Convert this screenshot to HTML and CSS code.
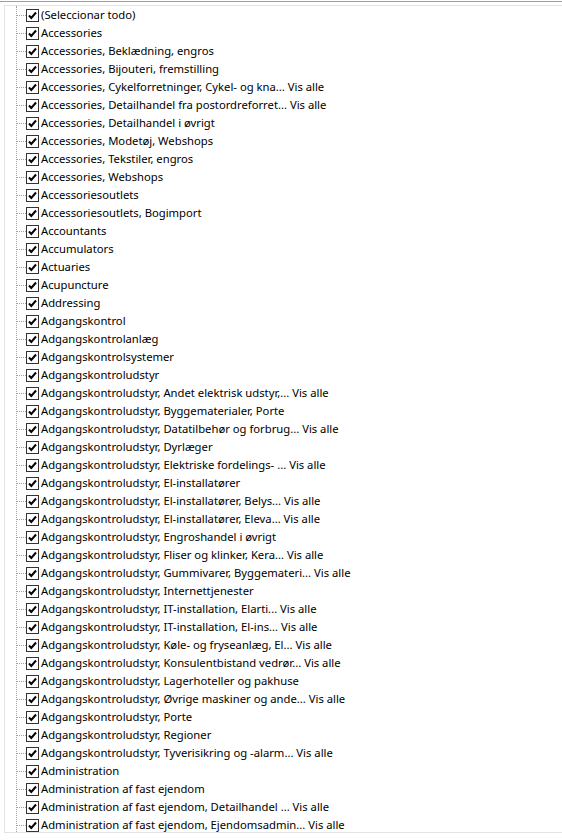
FILE: index.html
```html
<!DOCTYPE html>
<html>
<head>
<meta charset="utf-8">
<link rel="stylesheet" href="styles.css">
</head>
<body>
<div class="frame">
  <div class="panel">
    <div class="tree">
      <div class="row"><span class="conn"></span><span class="cb"><svg viewBox="0 0 13 13" width="13" height="13"><path d="M3 6.5 L5.3 9 L10 3.5" fill="none" stroke="#000" stroke-width="2"/></svg></span><span class="label">(Seleccionar todo)</span></div>
    </div>
  </div>
</div>
<script src="app.js"></script>
</body>
</html>
```

FILE: app.js
```js
const items = [
"Accessories",
"Accessories, Beklædning, engros",
"Accessories, Bijouteri, fremstilling",
"Accessories, Cykelforretninger, Cykel- og kna... Vis alle",
"Accessories, Detailhandel fra postordreforret... Vis alle",
"Accessories, Detailhandel i øvrigt",
"Accessories, Modetøj, Webshops",
"Accessories, Tekstiler, engros",
"Accessories, Webshops",
"Accessoriesoutlets",
"Accessoriesoutlets, Bogimport",
"Accountants",
"Accumulators",
"Actuaries",
"Acupuncture",
"Addressing",
"Adgangskontrol",
"Adgangskontrolanlæg",
"Adgangskontrolsystemer",
"Adgangskontroludstyr",
"Adgangskontroludstyr, Andet elektrisk udstyr,... Vis alle",
"Adgangskontroludstyr, Byggematerialer, Porte",
"Adgangskontroludstyr, Datatilbehør og forbrug... Vis alle",
"Adgangskontroludstyr, Dyrlæger",
"Adgangskontroludstyr, Elektriske fordelings- ... Vis alle",
"Adgangskontroludstyr, El-installatører",
"Adgangskontroludstyr, El-installatører, Belys... Vis alle",
"Adgangskontroludstyr, El-installatører, Eleva... Vis alle",
"Adgangskontroludstyr, Engroshandel i øvrigt",
"Adgangskontroludstyr, Fliser og klinker, Kera... Vis alle",
"Adgangskontroludstyr, Gummivarer, Byggemateri... Vis alle",
"Adgangskontroludstyr, Internettjenester",
"Adgangskontroludstyr, IT-installation, Elarti... Vis alle",
"Adgangskontroludstyr, IT-installation, El-ins... Vis alle",
"Adgangskontroludstyr, Køle- og fryseanlæg, El... Vis alle",
"Adgangskontroludstyr, Konsulentbistand vedrør... Vis alle",
"Adgangskontroludstyr, Lagerhoteller og pakhuse",
"Adgangskontroludstyr, Øvrige maskiner og ande... Vis alle",
"Adgangskontroludstyr, Porte",
"Adgangskontroludstyr, Regioner",
"Adgangskontroludstyr, Tyverisikring og -alarm... Vis alle",
"Administration",
"Administration af fast ejendom",
"Administration af fast ejendom, Detailhandel ... Vis alle",
"Administration af fast ejendom, Ejendomsadmin... Vis alle"
];
const tree = document.querySelector('.tree');
const tpl = tree.querySelector('.row');
for (const t of items) {
  const r = tpl.cloneNode(true);
  r.querySelector('.label').textContent = t;
  tree.appendChild(r);
}
```

FILE: styles.css
```css
html, body {
  margin: 0;
  padding: 0;
  background: #fff;
}
body {
  width: 562px;
  height: 840px;
  overflow: hidden;
  font-family: "Noto Sans", "Segoe UI", sans-serif;
  font-size: 11.25px;
  color: #000;
}
.frame {
  border-top: 1px solid #a0a0a0;
  margin-top: 1px;
  padding: 3px 0 0 4px;
}
.panel {
  border: 1px solid #e3e3e3;
  border-right: none;
  height: 826px;
  overflow: hidden;
}
.tree {
  margin: 9px 0 0 11px;
  border-left: 1px dotted #a0a0a0;
  height: 830px;
}
.row {
  display: flex;
  align-items: center;
  height: 18px;
}
.row:first-child {
  margin-top: -9px;
}
.conn {
  width: 9px;
  height: 0;
  border-top: 1px dotted #a0a0a0;
}
.cb {
  width: 13px;
  height: 13px;
  box-sizing: border-box;
  border: 1px solid #333;
  background: #fff;
  display: flex;
}
.cb svg {
  margin: -1px;
}
.label {
  margin-left: 2px;
  white-space: nowrap;
  line-height: 18px;
}
```
